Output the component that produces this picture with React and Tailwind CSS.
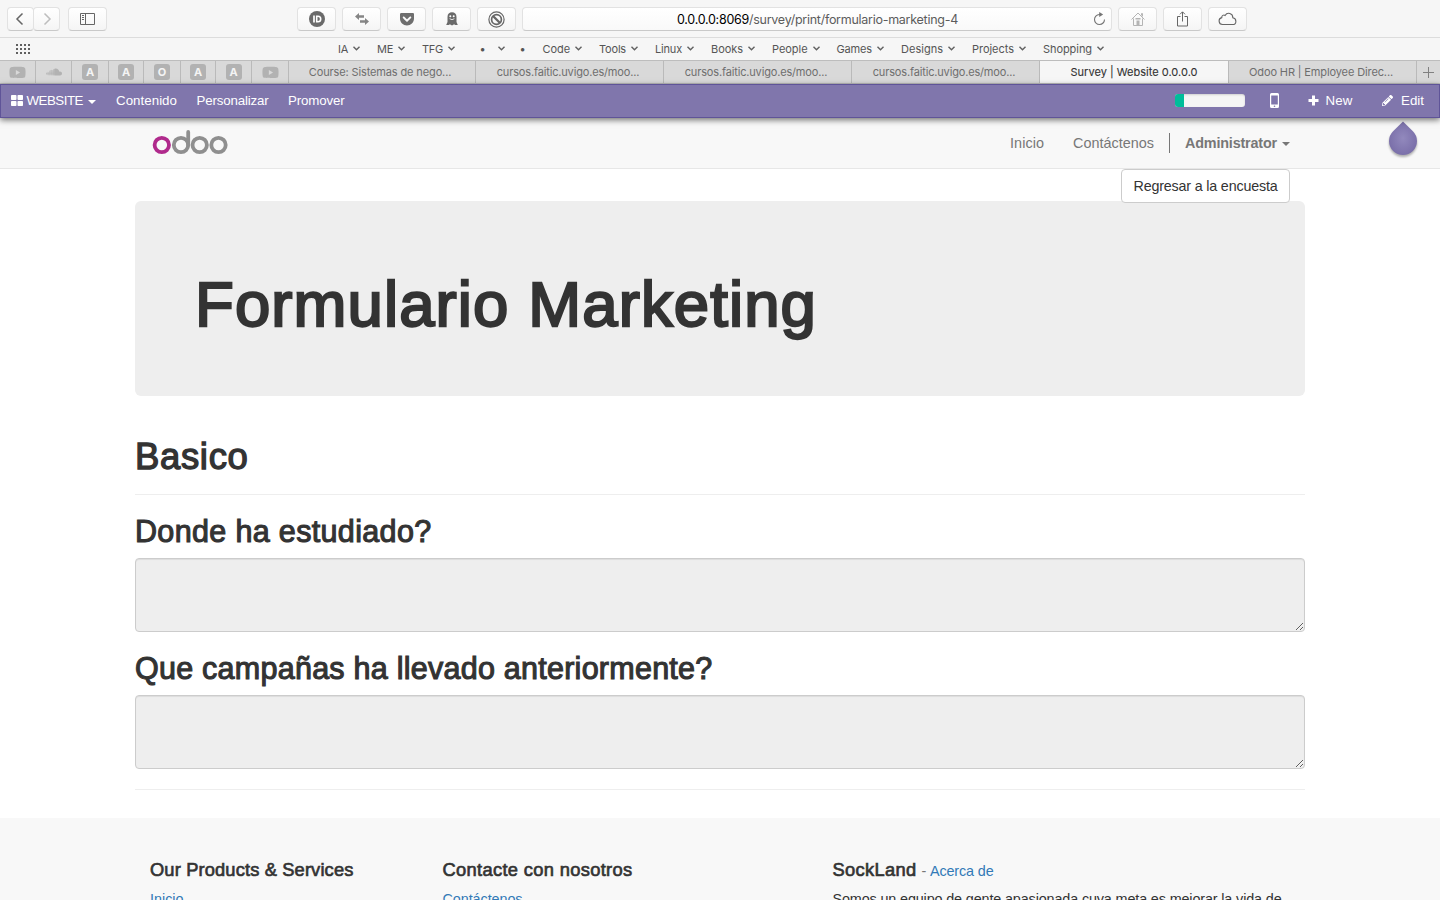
import { useLayoutEffect, useRef } from "react";
import { FaYoutube, FaSoundcloud, FaPencilAlt, FaGetPocket } from "react-icons/fa";

// Spreads the letters of a label so that it fills the given width.
function Fit({ w, className = "", children }) {
  const ref = useRef(null);
  useLayoutEffect(() => {
    const el = ref.current;
    el.style.letterSpacing = "0px";
    const natural = el.getBoundingClientRect().width;
    el.style.letterSpacing = `${(w - natural) / el.textContent.length}px`;
  }, [w]);
  return (
    <span ref={ref} className={`inline-block shrink-0 whitespace-nowrap ${className}`}>
      {children}
    </span>
  );
}

function ToolButton({ children, className = "w-[39px]" }) {
  return (
    <button
      className={`flex h-6 shrink-0 items-center justify-center rounded-[4px] border border-[#e2e2e2] border-b-[#c9c9c9] bg-linear-to-b from-white to-[#f5f5f5] text-[#6e6e6e] ${className}`}
    >
      {children}
    </button>
  );
}

function Toolbar() {
  return (
    <div className="flex h-[38px] items-center border-b border-[#dcdcdc] pl-[7px]">
      <ToolButton className="w-[27px]">
        <svg className="-ml-0.5" width="9" height="14" viewBox="0 0 9 14" fill="none" stroke="#666" strokeWidth="1.5">
          <path d="M7.500 1.500 2 7 7.500 12.500" />
        </svg>
      </ToolButton>
      <ToolButton className="-ml-px w-[27px]">
        <svg className="ml-0.5" width="9" height="14" viewBox="0 0 9 14" fill="none" stroke="#bdbdbd" strokeWidth="1.500">
          <path d="M1.500 1.500 7 7 1.500 12.500" />
        </svg>
      </ToolButton>
      <ToolButton className="ml-2 w-[39px]">
        <svg width="15" height="12" viewBox="0 0 15 12" fill="none" stroke="#666" strokeWidth="1">
          <path d="M.5.5h14v11H.5zM5.500.5v11M2 2.500h2M2 4.500h2M2 6.500h2" />
        </svg>
      </ToolButton>
      <div className="ml-[190px] flex gap-1.5">
        <ToolButton>
          <svg width="16" height="16" viewBox="0 0 16 16">
            <circle cx="8" cy="8" r="8" fill="#6a6a6a" />
            <path d="M5 4.500v7" stroke="#fff" strokeWidth="1.700" />
            <path d="M7.700 5.300h1.300a2.700 2.700 0 0 1 0 5.400H7.700z" fill="none" stroke="#fff" strokeWidth="1.600" />
          </svg>
        </ToolButton>
        <ToolButton>
          <svg width="14" height="12" viewBox="0 0 14 12" fill="#858585">
            <path d="M0 3.500 4 0v2.300h5v2.400H4V7zM14 8.500 10 12V9.700H5V7.300h5V5z" />
          </svg>
        </ToolButton>
        <ToolButton>
          <FaGetPocket size={16} />
        </ToolButton>
        <ToolButton>
          <svg width="12" height="14" viewBox="0 0 12 14">
            <path
              d="M1.500 5C1.500 1.800 3.300.3 6 .3S10.500 1.800 10.500 5v5l1.300 3H9.300L8 12.200 6.700 13.300H5.300L4 12.200 2.700 13H.2l1.300-3z"
              fill="#6a6a6a"
            />
            <circle cx="4.300" cy="4.200" r="1" fill="#fff" />
            <circle cx="7.700" cy="4.200" r="1" fill="#fff" />
            <path d="M3.600 6.700q2.400 2 4.800 0" fill="none" stroke="#fff" strokeWidth=".8" />
          </svg>
        </ToolButton>
        <ToolButton>
          <svg className="mt-px" width="17" height="17" viewBox="0 0 17 17" fill="none" stroke="#666">
            <circle cx="8.500" cy="8.500" r="7.600" strokeWidth="1.200" />
            <circle cx="8.500" cy="8.500" r="4.900" strokeWidth="1.700" />
            <path d="m5 5 7 7" strokeWidth="2.300" />
          </svg>
        </ToolButton>
        <div className="flex h-6 w-[590px] items-center rounded-[4px] border border-[#e2e2e2] border-b-[#c9c9c9] bg-linear-to-b from-white to-[#f9f9f9] pl-[154px] text-[12.500px] leading-4">
          <Fit w={72} className="mt-[3px] text-black">0.0.0.0:8069</Fit>
          <Fit w={209} className="mt-[3px] text-[#5c5c5c]">/survey/print/formulario-marketing-4</Fit>
          <svg className="mr-[5px] ml-auto" width="13" height="14" viewBox="0 0 13 14" fill="none" stroke="#757575">
            <path d="M7 2.500H6.300a5 5 0 1 0 5.200 5" strokeWidth="1.100" />
            <path d="M6.200 0v5l4-2.500z" fill="#757575" stroke="none" />
          </svg>
        </div>
        <ToolButton>
          <svg width="14" height="14" viewBox="0 0 14 14" fill="none" stroke="#b4b4b4">
            <path d="M.5 7.500 7 1l6.500 6.500M2.500 6.500v7h9v-7M10.500 3.500V1.500h1v3" />
            <path d="M4.500 6h5v1.500h-5zM5.500 8.500h3v5h-3z" fill="#b4b4b4" stroke="none" />
          </svg>
        </ToolButton>
        <ToolButton>
          <svg width="11" height="16" viewBox="0 0 11 16" fill="none" stroke="#666">
            <path d="M3.500 5.500h-3v9.500h10V5.500h-3M5.500 10.500V1M3 3.300 5.500.8 8 3.300" />
          </svg>
        </ToolButton>
        <ToolButton>
          <svg width="19" height="14" viewBox="0 0 19 14" fill="none" stroke="#666" strokeWidth="1.100">
            <path d="M4.500 12.500a3.500 3.500 0 0 1-.7-6.900c-.3-2 2-3.200 3.300-2.100C9.300-.3 15 1.200 14.800 5.800c4 .6 4.300 6.700-.3 6.700z" />
          </svg>
        </ToolButton>
      </div>
    </div>
  );
}

const bookmarks = [
  ["IA", 10],
  ["ME", 16],
  ["TFG", 21],
  ["•", 21],
  ["•", 3.5],
  ["Code", 27.5],
  ["Tools", 27],
  ["Linux", 27],
  ["Books", 32],
  ["People", 35.5],
  ["Games", 35.5],
  ["Designs", 42],
  ["Projects", 42],
  ["Shopping", 49],
];

function Chevron() {
  return (
    <svg className="-mt-px ml-[5px]" width="7" height="5" viewBox="0 0 7 5" fill="none" stroke="#606060" strokeWidth="1.400">
      <path d="M.5.8 3.500 3.800 6.500.8" />
    </svg>
  );
}

function Bookmarks() {
  return (
    <div className="flex h-[23px] items-center border-b border-[#bdbdbd] pl-4 text-[11px] text-[#555]">
      <svg width="14" height="10" viewBox="0 0 14 10" fill="#606060">
        {[0, 4, 8].map((y) => [0, 4, 8, 12].map((x) => <rect key={`${x}-${y}`} x={x} y={y} width="2" height="2" />))}
      </svg>
      <div className="ml-[308px] flex items-center gap-[17px]">
        {bookmarks.map(([label, width], i) =>
          label === "•" ? (
            <div key={i} className="flex items-center">
              <span className={i === 3 ? "flex w-[21px] justify-center" : "flex w-px justify-center"}>
                <span className="text-[11px]">•</span>
              </span>
              {i === 3 ? <Chevron /> : <span className="w-[2.500px]" />}
            </div>
          ) : (
            <div key={i} className="flex items-center">
              <Fit w={width}>{label}</Fit>
              <Chevron />
            </div>
          ),
        )}
      </div>
    </div>
  );
}

const yt = <FaYoutube size={17} color="#b2b2b2" />;
const letter = (c) => (
  <span className="flex size-4 items-center justify-center rounded-[3px] bg-[#b2b2b2] text-[11px] font-bold text-[#f4f4f4]">{c}</span>
);

function Pinned({ className, children }) {
  return <div className={`flex shrink-0 items-center justify-center border-r border-[#bababa] ${className}`}>{children}</div>;
}

function Tab({ className, w, active, children }) {
  return (
    <div
      className={`flex shrink-0 items-center justify-center border-r border-[#bababa] ${active ? "bg-[#f6f6f6] text-[#333] [-webkit-text-stroke:0.1px_#333]" : "text-[#6e6e6e]"} ${className}`}
    >
      <Fit w={w}>{children}</Fit>
    </div>
  );
}

function Tabs() {
  return (
    <div className="flex h-[23px] border-b border-[#bdbdbd] bg-[#d9d9d9] text-[11px]">
      <Pinned className="w-9">{yt}</Pinned>
      <Pinned className="w-9"><FaSoundcloud size={16} color="#b2b2b2" /></Pinned>
      <Pinned className="w-[37px]">{letter("A")}</Pinned>
      <Pinned className="w-[35px]">{letter("A")}</Pinned>
      <Pinned className="w-[37px]">{letter("O")}</Pinned>
      <Pinned className="w-[35px]">{letter("A")}</Pinned>
      <Pinned className="w-9">{letter("A")}</Pinned>
      <Pinned className="w-[37px]">{yt}</Pinned>
      <Tab className="w-[187px] pr-1" w={142.5}>Course: Sistemas de nego...</Tab>
      <Tab className="w-[188px] pr-[3px]" w={142.5}>cursos.faitic.uvigo.es/moo...</Tab>
      <Tab className="w-[188px] pr-[3px]" w={142.5}>cursos.faitic.uvigo.es/moo...</Tab>
      <Tab className="w-[188px] pr-[3px]" w={142.5}>cursos.faitic.uvigo.es/moo...</Tab>
      <Tab className="w-[189px]" w={127} active>Survey | Website 0.0.0.0</Tab>
      <Tab className="w-[188px] pr-[3px]" w={144}>Odoo HR | Employee Direc...</Tab>
      <div className="flex flex-1 items-center justify-center">
        <svg width="11" height="11" viewBox="0 0 11 11" stroke="#808080">
          <path d="M5.500 0v11M0 5.500h11" />
        </svg>
      </div>
    </div>
  );
}

function Caret({ className }) {
  return (
    <svg className={className} width="8" height="4" viewBox="0 0 8 4" fill="currentColor">
      <path d="M0 0h8L4 4z" />
    </svg>
  );
}

function AdminBar() {
  return (
    <div className="relative z-10 flex h-[34px] items-center border border-[#5f5498] bg-[#8076ac] pr-[15px] pb-px pl-[10px] text-[13.300px] text-white shadow-[0_2px_6px_rgba(0,0,0,0.55)]">
      <svg width="12" height="11" viewBox="0 0 12 11" fill="#fff">
        <rect width="5.500" height="5" rx=".8" />
        <rect x="6.500" width="5.500" height="5" rx=".8" />
        <rect y="6" width="5.500" height="5" rx=".8" />
        <rect x="6.500" y="6" width="5.500" height="5" rx=".8" />
      </svg>
      <Fit w={56.5} className="ml-[3.500px]">WEBSITE</Fit>
      <Caret className="mt-[3px] ml-[5px]" />
      <Fit w={61} className="ml-5">Contenido</Fit>
      <Fit w={72} className="ml-[19.500px]">Personalizar</Fit>
      <Fit w={56.5} className="ml-[19.500px]">Promover</Fit>
      <div className="ml-auto flex h-[13px] w-[70px] overflow-hidden rounded-[3px] bg-[#f5f5f5] shadow-[inset_0_1px_2px_rgba(0,0,0,0.15)]">
        <div className="w-[9px] bg-[#00bd9a]" />
      </div>
      <svg className="ml-[25px]" width="9" height="15" viewBox="0 0 9 15">
        <path d="M1.500 0h6A1.500 1.500 0 0 1 9 1.500v12A1.500 1.500 0 0 1 7.500 15h-6A1.500 1.500 0 0 1 0 13.500v-12A1.500 1.500 0 0 1 1.500 0z" fill="#fff" />
        <path d="M1.200 2.500h6.600v9H1.200z" fill="#8076ac" />
        <circle cx="4.500" cy="13.200" r=".8" fill="#8076ac" />
      </svg>
      <svg className="ml-[29px]" width="11" height="11" viewBox="0 0 11 11" stroke="#fff" strokeWidth="3">
        <path d="M5.500.500v10M.5 5.500h10" />
      </svg>
      <Fit w={27} className="ml-[6.500px]">New</Fit>
      <FaPencilAlt className="ml-[29px]" size={11} />
      <Fit w={23} className="ml-[8.500px]">Edit</Fit>
    </div>
  );
}

function SiteHeader() {
  return (
    <header className="relative flex h-[51px] border-b border-[#e7e7e7] bg-[#f8f8f8] pl-[152px] text-[14.400px] text-[#777]">
      <svg className="mt-[12px]" width="77" height="25" viewBox="0 0 77 25" fill="none" stroke="#8f8f8f" strokeWidth="3.800">
        <circle cx="9.800" cy="15" r="7.200" stroke="#b02a8c" />
        <circle cx="29" cy="15" r="7.200" />
        <path d="M36.200 15V1.900" strokeLinecap="round" />
        <circle cx="47.700" cy="15" r="7.200" />
        <circle cx="66.500" cy="15" r="7.200" />
      </svg>
      <nav className="ml-auto flex h-[50px] items-center pr-[150px]">
        <Fit w={34} className="mt-0.5">Inicio</Fit>
        <Fit w={81} className="mt-0.5 ml-[29px]">Contáctenos</Fit>
        <div className="mr-[15px] ml-[15px] h-5 w-px bg-[#777]" />
        <Fit w={92} className="mt-0.5 font-bold">Administrator</Fit>
        <Caret className="mt-px ml-[5px]" />
      </nav>
      <svg className="absolute top-[2px] right-[20px] drop-shadow-[0_2px_1px_rgba(0,0,0,0.3)]" width="34" height="40" viewBox="0 0 34 40">
        <defs>
          <radialGradient id="drop">
            <stop offset="0" stopColor="#9289bd" />
            <stop offset="1" stopColor="#7b70aa" />
          </radialGradient>
        </defs>
        <path d="M17 1.500 26.900 11.200a14 14 0 1 1-19.800 0z" fill="url(#drop)" />
      </svg>
    </header>
  );
}

const stroke = "[-webkit-text-stroke:0.036em_#333]";

function Question({ w, children, className }) {
  return (
    <div className={className}>
      <h2 className="flex h-[33px] items-center text-[30.500px]">
        <Fit w={w} className={stroke}>{children}</Fit>
      </h2>
      <textarea
        readOnly
        className="mt-[10px] block h-[74px] w-full resize-y rounded-[4px] border border-[#ccc] bg-[#eee] shadow-[inset_0_1px_1px_rgba(0,0,0,0.075)] outline-none"
      />
    </div>
  );
}

function Footer() {
  return (
    <footer className="mt-7 flex h-[82px] bg-[#f8f8f8] pt-[42px] pl-[150px] text-[14.400px] leading-5">
      <div className="w-[292.500px]">
        <h4 className="flex h-5 items-center text-[18.300px]"><Fit w={203.5} className={stroke}>Our Products &amp; Services</Fit></h4>
        <a className="mt-[9px] block text-[#337ab7]"><Fit w={33.5}>Inicio</Fit></a>
      </div>
      <div className="w-[390px]">
        <h4 className="flex h-5 items-center text-[18.300px]"><Fit w={190} className={stroke}>Contacte con nosotros</Fit></h4>
        <a className="mt-[9px] block text-[#337ab7]"><Fit w={80}>Contáctenos</Fit></a>
      </div>
      <div>
        <h4 className="flex h-5 items-baseline text-[18.300px] leading-5">
          <Fit w={84} className={stroke}>SockLand</Fit>
          <Fit w={5} className="ml-[5px] text-[14.400px] text-[#777]">-</Fit>
          <Fit w={63.5} className="ml-[3.500px] text-[14.400px] text-[#337ab7]">Acerca de</Fit>
        </h4>
        <p className="mt-[9px]"><Fit w={449}>Somos un equipo de gente apasionada cuya meta es mejorar la vida de</Fit></p>
      </div>
    </footer>
  );
}

export default function App() {
  return (
    <div className="h-[900px] w-[1440px] overflow-hidden bg-white font-['Liberation_Sans',Arial,sans-serif] text-[#333]">
      <div className="bg-[#f6f6f6] font-[Inter,sans-serif]">
        <Toolbar />
        <Bookmarks />
        <Tabs />
      </div>
      <AdminBar />
      <SiteHeader />
      <main className="mx-auto w-[1170px]">
        <div className="relative flex h-8 justify-end pr-[15px]">
          <button className="h-[34px] w-[169px] shrink-0 rounded-[4px] border border-[#ccc] bg-white pt-0.5 text-[14.300px]">
            <Fit w={144}>Regresar a la encuesta</Fit>
          </button>
        </div>
        <div className="h-[195px] rounded-[6px] bg-[#eee] pt-[69px] pl-[60px]">
          <h1 className="flex h-[70px] items-center text-[63.500px]">
            <Fit w={622} className={stroke}>Formulario Marketing</Fit>
          </h1>
        </div>
        <h1 className="mt-[41px] flex h-10 items-center text-[36.500px]">
          <Fit w={113.5} className={stroke}>Basico</Fit>
        </h1>
        <hr className="mt-[17px] border-[#eee]" />
        <Question className="mt-5" w={296.5}>Donde ha estudiado?</Question>
        <Question className="mt-5" w={577.5}>Que campañas ha llevado anteriormente?</Question>
        <hr className="mt-5 border-[#eee]" />
      </main>
      <Footer />
    </div>
  );
}
